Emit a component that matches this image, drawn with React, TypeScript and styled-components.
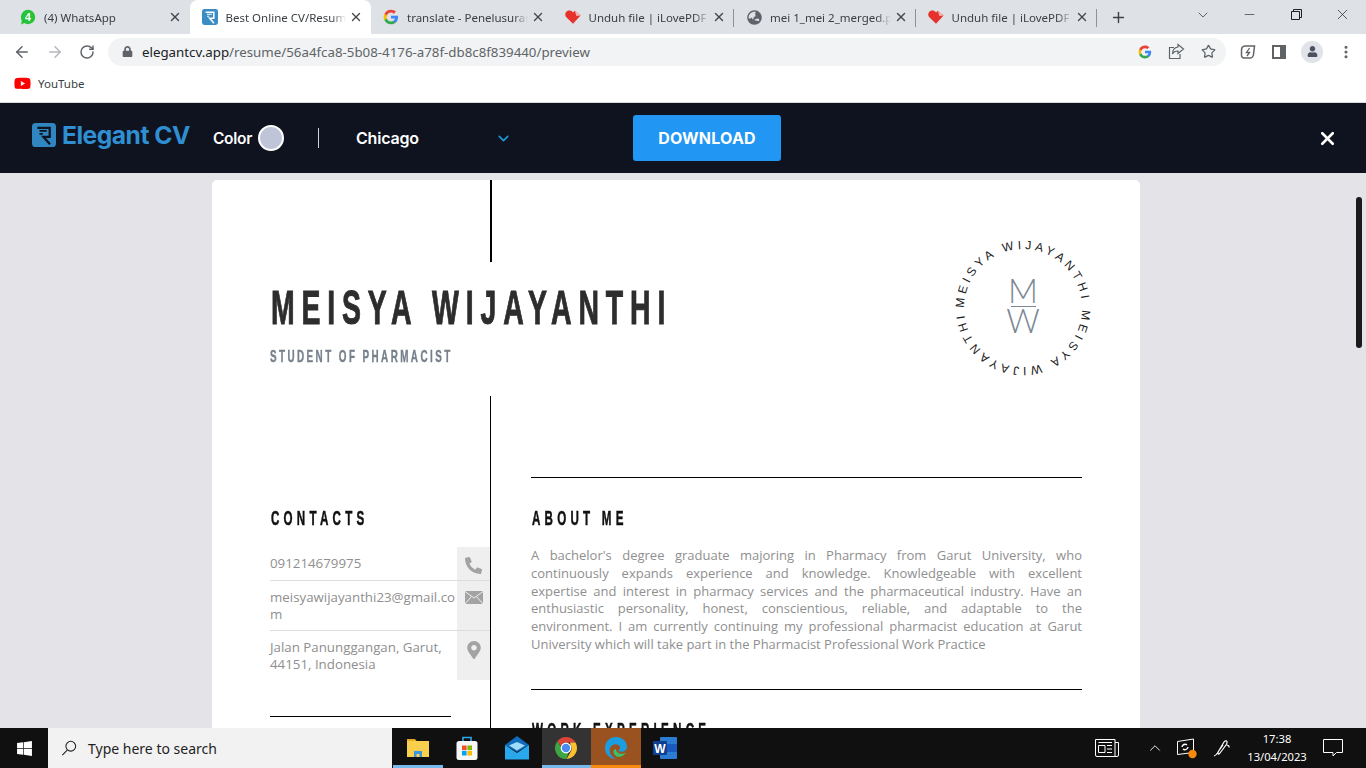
import React from "react";
import styled, { createGlobalStyle, css } from "styled-components";
import {
  ArrowLeft,
  ArrowRight,
  ChevronDown,
  ChevronUp,
  EllipsisVertical,
  Minus,
  Plus,
  RotateCw,
  Star,
  X,
} from "lucide-react";
import { FaGlobeAsia, FaLock, FaMapMarkerAlt, FaPhoneAlt, FaUser, FaWindows, FaYoutube } from "react-icons/fa";

// --- ICONS ---

const GoogleIcon = ({ size = 16 }: { size?: number }) => (
  <svg width={size} height={size} viewBox="0 0 24 24">
    <path fill="#4285f4" d="M22.56 12.25c0-.78-.07-1.53-.2-2.25H12v4.26h5.92c-.26 1.37-1.04 2.53-2.21 3.31v2.77h3.57c2.08-1.92 3.28-4.74 3.28-8.09z" />
    <path fill="#34a853" d="M12 23c2.97 0 5.46-.98 7.28-2.66l-3.57-2.77c-.98.66-2.23 1.06-3.71 1.06-2.86 0-5.29-1.93-6.16-4.53H2.18v2.84C3.99 20.53 7.7 23 12 23z" />
    <path fill="#fbbc05" d="M5.84 14.09c-.22-.66-.35-1.36-.35-2.09s.13-1.43.35-2.09V7.07H2.18C1.43 8.55 1 10.22 1 12s.43 3.45 1.18 4.93l2.85-2.22.81-.62z" />
    <path fill="#ea4335" d="M12 5.38c1.62 0 3.06.56 4.21 1.64l3.15-3.15C17.45 2.09 14.97 1 12 1 7.7 1 3.99 3.47 2.18 7.07l3.66 2.84c.87-2.6 3.3-4.53 6.16-4.53z" />
  </svg>
);

const WhatsAppIcon = () => (
  <svg width="16" height="16" viewBox="0 0 16 16">
    <circle cx="8" cy="8" r="7.2" fill="#25c337" />
    <path fill="#25c337" d="M1 15.5 2.2 10l3.4 3.6z" />
    <text x="8" y="11.6" textAnchor="middle" fontSize="10.5" fontWeight="700" fill="#fff" fontFamily="Liberation Sans">4</text>
  </svg>
);

const ResumeIcon = ({ size = 18, color = "#3a8cc4", ink = "#fff" }: { size?: number; color?: string; ink?: string }) => (
  <svg width={size} height={size} viewBox="0 0 16 16">
    <rect width="16" height="16" rx="2.4" fill={color} />
    <path fill="none" stroke={ink} strokeWidth="1.5" d="M3.6 3.2h8.2v6H7.6l4.4 5" />
    <path fill="none" stroke={ink} strokeWidth="1.1" d="M5 5.2h4.8M5 7.2h2.2" />
  </svg>
);

const HeartIcon = () => (
  <svg width="18" height="16" viewBox="0 0 18 16">
    <path fill="#e5322d" d="M9 15.5 1.2 8C-.4 6 .2 2.6 2.6 1.3 4.8.2 7.4.8 9 2.8l2-1.7L17.5 6.3 9 15.5z" />
    <path fill="#f7b5b2" d="M11 1.1 17.5 6.3l-4.6.6z" />
  </svg>
);

const ChromeIcon = () => (
  <svg width="24" height="24" viewBox="0 0 24 24">
    <path fill="#db4437" d="M12 1a11 11 0 0 1 9.53 5.5H12a5.5 5.5 0 0 0-5.2 3.7L3.6 4.9A11 11 0 0 1 12 1z" />
    <path fill="#fbc02d" d="M21.53 6.5A11 11 0 0 1 12.6 23l4.2-7.5a5.5 5.5 0 0 0 .2-5.6l-1-3.4z" />
    <path fill="#3da543" d="M3.6 4.9l4.6 8.9a5.5 5.5 0 0 0 6.1 2.9L12.6 23A11 11 0 0 1 3.6 4.9z" />
    <circle cx="12" cy="12" r="5.4" fill="#fff" />
    <circle cx="12" cy="12" r="4.2" fill="#4a8bf0" />
  </svg>
);

const EdgeIcon = () => (
  <svg width="24" height="24" viewBox="0 0 24 24">
    <path fill="#1b9de2" d="M1 12C1 5.9 5.9 1 12 1c6 0 11 4.3 11 9.8 0 3.2-2.6 5-5.4 5-1.6 0-3.1-.5-3.8-1.2 2-.6 2.9-2 2.2-3.8-.9-2.2-3.8-3.2-6.2-2.3C6.9 9.6 5 12.5 5.8 16c.7 3 3 5.8 6.2 7C5.9 23 1 18 1 12z" />
    <path fill="#37c26b" d="M9.5 15c-.3 3.6 3 6.6 6.8 5.7 2.7-.6 4.7-2.2 5.5-4.4-1 1-2.7 1.6-4.3 1.5-3.3-.1-5.2-1.7-5.8-4.8-.9.2-1.9 1-2.2 2z" />
  </svg>
);

const ExplorerIcon = () => (
  <svg width="24" height="24" viewBox="0 0 24 24">
    <path fill="#e5a823" d="M1 3h8l2 2.5H1z" />
    <rect x="1" y="5" width="22" height="16" fill="#fbcf4e" />
    <path fill="#3a96dd" d="M8 21v-6h8v6h-2.5v-3h-3v3z" />
  </svg>
);

const StoreIcon = () => (
  <svg width="24" height="26" viewBox="0 0 24 26">
    <path fill="none" stroke="#29a9e8" strokeWidth="1.6" d="M8 7V2.5h8V7" />
    <rect x="1.5" y="6" width="21" height="19" rx="2.5" fill="#f7f7f7" />
    <rect x="7" y="10.5" width="4.6" height="4.6" fill="#f25022" />
    <rect x="12.4" y="10.5" width="4.6" height="4.6" fill="#7fba00" />
    <rect x="7" y="15.9" width="4.6" height="4.6" fill="#00a4ef" />
    <rect x="12.4" y="15.9" width="4.6" height="4.6" fill="#ffb900" />
  </svg>
);

const MailIcon = () => (
  <svg width="26" height="26" viewBox="0 0 26 26">
    <path fill="#0f6cbd" d="M13 1 25 10 13 17 1 10z" />
    <path fill="#2aa8ee" d="M1 10 13 18l12-8v14.5H1z" />
    <path fill="#9fdcfb" d="M5 10.5 13 7l8 3.5-8 5z" />
  </svg>
);

const WordIcon = () => (
  <svg width="26" height="26" viewBox="0 0 26 26">
    <rect x="8" y="2" width="17" height="22" rx="1" fill="#2b7cd3" />
    <rect x="8" y="9" width="17" height="8" fill="#185abd" />
    <rect x="1" y="6" width="14" height="14" rx="1" fill="#103f91" />
    <text x="8" y="17.5" textAnchor="middle" fontSize="12" fontWeight="700" fill="#fff" fontFamily="Liberation Sans">W</text>
  </svg>
);

const NewsIcon = () => (
  <svg width="24" height="18" viewBox="0 0 24 18" fill="none" stroke="#fff" strokeWidth="1">
    <path d="M.5.5H20v17H2A1.5 1.5 0 0 1 .5 16zM20 3.5h3.5V16a1.5 1.5 0 0 1-1.5 1.5h-2" />
    <path d="M3.5 6.5H10v7H3.500zM12 6.5h5M12 10h5M12 13.5h5M3.5 3.5H17" />
  </svg>
);

const SyncIcon = () => (
  <svg width="22" height="22" viewBox="0 0 22 22" fill="none" stroke="#fff" strokeWidth="1">
    <path d="M1.5 4.5 17.5 2v13.5l-16 2z" />
    <path strokeWidth="1.4" d="M6 10c.3-2.4 3-3.5 5-2.2M12 10c-.3 2.4-3 3.3-5 2.2" />
    <circle cx="16.5" cy="17" r="4.2" fill="#f7890c" stroke="none" />
  </svg>
);

const PenIcon = () => (
  <svg width="20" height="20" viewBox="0 0 20 20" fill="none" stroke="#fff" strokeWidth="1.2">
    <path d="M2 18c1.5-.3 2.5-1.5 3.5-3L12 4c1-1.5 2.5-1.5 3-.5s0 2-1 3.5L8 15c-1 1.3-1.7 1.3-2 .5s0-1.5 1-3L11 7" />
    <path d="M14.5 7c1.5 0 3 1 2.500 2.500" />
  </svg>
);

const PanelIcon = () => (
  <svg width="14" height="14" viewBox="0 0 14 14" fill="none">
    <rect x="1" y="1" width="12" height="12" stroke="#5f6368" strokeWidth="2" />
    <rect x="8" y="1" width="5" height="12" fill="#5f6368" />
  </svg>
);

const ExtensionIcon = () => (
  <svg width="18" height="18" viewBox="0 0 18 18" fill="none" stroke="#5f6368" strokeWidth="1.5">
    <path d="M6 3h9.5l-1 8.5a4 4 0 0 1-4 3.5H5a2.5 2.5 0 0 1-2.5-3V7A4 4 0 0 1 6 3z" />
    <path strokeWidth="1.3" d="M10.5 5 7.5 9.500h3L8 13" />
  </svg>
);

const ShareIcon = () => (
  <svg width="17" height="17" viewBox="0 0 17 17" fill="none" stroke="#5f6368" strokeWidth="1.2">
    <path d="M6 4.5H1.5v11H12V11" />
    <path d="M10 1.500 15.500 6 10 10.500V8C7.500 8 5.500 9 4.500 11c0-4 2-6.500 5.500-7z" />
  </svg>
);

const RestoreIcon = () => (
  <svg width="11" height="11" viewBox="0 0 11 11" fill="none" stroke="#1f1f1f">
    <path d="M.5 2.5h8v8h-8zM2.5 2.5v-2h8v8h-2" />
  </svg>
);

const EnvelopeGlyph = () => (
  <svg width="18" height="13" viewBox="0 0 18 13">
    <rect width="18" height="13" fill="#a3a3a3" />
    <path d="M0 .5 9 7l9-6.500M0 13l6.500-7.500M18 13l-6.500-7.500" fill="none" stroke="#efefef" />
  </svg>
);

const MonogramLogo = () => (
  <LogoSvg viewBox="0 0 150 150">
    <defs>
      <path id="monogram-ring" d="M16 75a59 59 0 1 1 118 0a59 59 0 1 1 -118 0" />
    </defs>
    <text fontFamily="Liberation Sans" fontSize="12" fill="#1c1c1c">
      <textPath href="#monogram-ring" textLength="370" lengthAdjust="spacing">
        MEISYA WIJAYANTHI MEISYA WIJAYANTHI{"\u00a0"}
      </textPath>
    </text>
    <text x="75" y="70" textAnchor="middle" fontFamily="Lato" fontWeight="300" fontSize="33" fill="#7d8794">M</text>
    <path d="M63 73.5h25" stroke="#7d8794" strokeWidth="1" />
    <text x="75" y="100" textAnchor="middle" fontFamily="Lato" fontWeight="300" fontSize="33" fill="#7d8794">W</text>
  </LogoSvg>
);

// --- DATA ---

const TABS = [
  { title: "(4) WhatsApp", icon: <WhatsAppIcon /> },
  { title: "Best Online CV/Resume Builder", icon: <ResumeIcon />, active: true },
  { title: "translate - Penelusuran Google", icon: <GoogleIcon /> },
  { title: "Unduh file | iLovePDF", icon: <HeartIcon />, divider: true },
  { title: "mei 1_mei 2_merged.pdf", icon: <FaGlobeAsia size={15} color="#5f6368" />, divider: true },
  { title: "Unduh file | iLovePDF", icon: <HeartIcon />, divider: true },
];

const CONTACTS = [
  { text: "091214679975", icon: <FaPhoneAlt size={17} /> },
  { text: "meisyawijayanthi23@gmail.com", icon: <EnvelopeGlyph /> },
  { text: "Jalan Panunggangan, Garut, 44151, Indonesia", icon: <FaMapMarkerAlt size={18} /> },
];

const TASK_APPS = [
  { icon: <ExplorerIcon />, running: true },
  { icon: <StoreIcon /> },
  { icon: <MailIcon /> },
  { icon: <ChromeIcon />, running: true, state: "open" },
  { icon: <EdgeIcon />, running: true, state: "alert" },
  { icon: <WordIcon /> },
];

// Split by hand: the substitute font would wrap this text at other words
const ABOUT_LINES = [
  "A bachelor's degree graduate majoring in Pharmacy from Garut University, who",
  "continuously expands experience and knowledge. Knowledgeable with excellent",
  "expertise and interest in pharmacy services and the pharmaceutical industry. Have an",
  "enthusiastic personality, honest, conscientious, reliable, and adaptable to the",
  "environment. I am currently continuing my professional pharmacist education at Garut",
  "University which will take part in the Pharmacist Professional Work Practice",
];

// --- RENDER ---

const App = () => (
  <>
    <GlobalStyle />
    <Screen>
      <TabStrip>
        {TABS.map((tab, index) => (
          <Tab key={index} $active={tab.active} $divider={tab.divider}>
            <TabIcon>{tab.icon}</TabIcon>
            <TabTitle>{tab.title}</TabTitle>
            <X size={14} strokeWidth={2.4} color="#45484c" />
          </Tab>
        ))}
        <NewTab>
          <Plus size={17} strokeWidth={2} color="#3c4043" />
        </NewTab>
        <WindowControls>
          <ChevronDown size={16} strokeWidth={1} color="#1f1f1f" />
          <Minus size={15} strokeWidth={1} color="#1f1f1f" />
          <RestoreIcon />
          <X size={17} strokeWidth={1} color="#1f1f1f" />
        </WindowControls>
      </TabStrip>

      <Toolbar>
        <NavButtons>
          <ArrowLeft size={18} strokeWidth={2} color="#5f6368" />
          <ArrowRight size={18} strokeWidth={2} color="#b4b7ba" />
          <RotateCw size={16} strokeWidth={2.2} color="#5f6368" />
        </NavButtons>
        <AddressBar>
          <FaLock size={11} color="#5f6368" />
          <Url>
            <b>elegantcv.app</b>/resume/56a4fca8-5b08-4176-a78f-db8c8f839440/preview
          </Url>
          <AddressActions>
            <GoogleIcon size={14} />
            <ShareIcon />
            <Star size={15} strokeWidth={2} color="#5f6368" />
          </AddressActions>
        </AddressBar>
        <ToolbarActions>
          <ExtensionIcon />
          <PanelIcon />
          <Avatar>
            <FaUser size={11} color="#4a5262" />
          </Avatar>
          <EllipsisVertical size={16} strokeWidth={2.6} color="#5f6368" />
        </ToolbarActions>
      </Toolbar>

      <BookmarkBar>
        <FaYoutube size={17} color="#f00" />
        <span>YouTube</span>
      </BookmarkBar>

      <AppHeader>
        <Brand>
          <ResumeIcon size={24} color="#2f86c1" ink="#0e131f" />
          <BrandName>Elegant CV</BrandName>
        </Brand>
        <ColorPicker>
          Color
          <Swatch />
        </ColorPicker>
        <TemplateSelect>
          <span>Chicago</span>
          <ChevronDown size={17} strokeWidth={2.4} color="#1f95d4" />
        </TemplateSelect>
        <DownloadButton>DOWNLOAD</DownloadButton>
        <CloseButton>
          <X size={21} strokeWidth={3} color="#fff" />
        </CloseButton>
      </AppHeader>

      <Viewport>
        <PageArea>
          <ResumeCard>
            <TopRule />
            <Masthead>
              <NameBlock>
                <Name>MEISYA WIJAYANTHI</Name>
                <JobTitle>STUDENT OF PHARMACIST</JobTitle>
              </NameBlock>
              <MonogramLogo />
            </Masthead>
            <Columns>
              <SideColumn>
                <SectionTitle>CONTACTS</SectionTitle>
                <ContactList>
                  {CONTACTS.map((contact) => (
                    <ContactRow key={contact.text}>
                      <ContactText>{contact.text}</ContactText>
                      <ContactIcon>{contact.icon}</ContactIcon>
                    </ContactRow>
                  ))}
                </ContactList>
                <SideRule />
              </SideColumn>
              <MainColumn>
                <Section>
                  <SectionTitle>ABOUT ME</SectionTitle>
                  <Paragraph>
                    {ABOUT_LINES.map((line) => (
                      <ParagraphLine key={line}>{line}</ParagraphLine>
                    ))}
                  </Paragraph>
                </Section>
                <Section>
                  <SectionTitle>WORK EXPERIENCE</SectionTitle>
                </Section>
              </MainColumn>
            </Columns>
          </ResumeCard>
        </PageArea>
        <ScrollTrack>
          <ScrollThumb />
        </ScrollTrack>
      </Viewport>

      <Taskbar>
        <StartButton>
          <FaWindows size={17} color="#fff" />
        </StartButton>
        <SearchBox>
          <SearchGlyph viewBox="0 0 18 18">
            <circle cx="11" cy="7" r="5.5" />
            <path d="M7 11.5 1.5 17" />
          </SearchGlyph>
          Type here to search
        </SearchBox>
        <TaskApps>
          {TASK_APPS.map((app, index) => (
            <TaskApp key={index} $running={app.running} $state={app.state}>
              {app.icon}
            </TaskApp>
          ))}
        </TaskApps>
        <Tray>
          <TrayItem $width={60}>
            <NewsIcon />
          </TrayItem>
          <TrayItem $width={36}>
            <ChevronUp size={18} strokeWidth={1.2} color="#fff" />
          </TrayItem>
          <TrayItem $width={28}>
            <SyncIcon />
          </TrayItem>
          <TrayItem $width={42}>
            <PenIcon />
          </TrayItem>
          <Clock>
            <span>17:38</span>
            <span>13/04/2023</span>
          </Clock>
          <TrayItem $width={44}>
            <NotificationGlyph viewBox="0 0 20 18">
              <path d="M.5.5h19v13h-6L10 17v-3.5H.5z" />
            </NotificationGlyph>
          </TrayItem>
        </Tray>
      </Taskbar>
    </Screen>
  </>
);

export default App;

// Bebas Neue is not installed, so the headings squeeze a bold sans sideways
const condensed = css`
  font-family: "Liberation Sans", sans-serif;
  font-weight: 700;
  white-space: nowrap;
  transform: scaleX(0.58);
  transform-origin: left center;
`;

const GlobalStyle = createGlobalStyle`
  html, body {
    margin: 0;
    height: 100%;
    overflow: hidden;
  }

  * {
    box-sizing: border-box;
  }
`;

const Screen = styled.div`
  display: flex;
  flex-direction: column;
  width: 1366px;
  height: 768px;
  overflow: hidden;
  font-family: "Noto Sans", sans-serif;
`;

const TabStrip = styled.div`
  display: flex;
  align-items: stretch;
  height: 34px;
  padding-left: 8px;
  background: #dee1e6;
`;

const Tab = styled.div<{ $active?: boolean; $divider?: boolean }>`
  position: relative;
  display: flex;
  align-items: center;
  gap: 3px;
  width: 181.5px;
  padding: 0 8px 0 12px;
  border-radius: 8px 8px 0 0;
  background: ${({ $active }) => ($active ? "#fff" : "transparent")};

  &::after {
    content: "";
    display: ${({ $divider }) => ($divider ? "block" : "none")};
    position: absolute;
    right: 0;
    top: 9px;
    height: 18px;
    width: 1px;
    background: #8e9196;
  }
`;

const TabIcon = styled.span`
  display: flex;
  justify-content: center;
  width: 16px;
  margin-right: 5px;
  flex-shrink: 0;
`;

const TabTitle = styled.span`
  flex: 1;
  overflow: hidden;
  font-size: 11.5px;
  color: #3c4043;
  white-space: nowrap;
  -webkit-mask-image: linear-gradient(to right, #000 88%, transparent);
  mask-image: linear-gradient(to right, #000 88%, transparent);
`;

const NewTab = styled.div`
  display: flex;
  align-items: center;
  margin-left: 13px;
`;

const WindowControls = styled.div`
  display: grid;
  grid-template-columns: repeat(4, 46.5px);
  align-items: center;
  justify-items: center;
  height: 29px;
  margin-left: auto;
`;

const Toolbar = styled.div`
  display: flex;
  align-items: center;
  height: 33px;
  padding: 2px 12px 0 13px;
  background: #fff;
`;

const NavButtons = styled.div`
  display: flex;
  align-items: center;
  gap: 15px;
  width: 95px;
`;

const AddressBar = styled.div`
  display: flex;
  align-items: center;
  gap: 9px;
  width: 1118px;
  height: 28px;
  padding: 0 10px 0 14px;
  border-radius: 14px;
  background: #f1f3f4;
`;

const Url = styled.span`
  flex: 1;
  font-size: 13.3px;
  color: #5f6368;

  b {
    font-weight: 400;
    color: #202124;
  }
`;

const AddressActions = styled.div`
  display: flex;
  align-items: center;
  gap: 16px;
`;

const ToolbarActions = styled.div`
  display: flex;
  align-items: center;
  justify-content: space-between;
  flex: 1;
  padding-left: 13px;
`;

const Avatar = styled.span`
  display: flex;
  align-items: center;
  justify-content: center;
  width: 22px;
  height: 22px;
  border-radius: 50%;
  background: #e1e3e8;
`;

const BookmarkBar = styled.div`
  display: flex;
  align-items: center;
  gap: 7px;
  height: 36px;
  padding: 0 0 2px 14px;
  border-bottom: 1px solid #d9dadc;
  background: #fff;
  font-size: 11.5px;
  color: #3c4043;
`;

const AppHeader = styled.header`
  display: flex;
  align-items: center;
  height: 70px;
  padding-left: 32px;
  background: #0e131f;
  font-family: Inter, sans-serif;
  color: #fff;
`;

const Brand = styled.div`
  display: flex;
  align-items: center;
  gap: 6px;
  width: 181px;
  margin-bottom: 6px;
`;

const BrandName = styled.span`
  font-size: 24.6px;
  font-weight: 700;
  letter-spacing: -0.5px;
  color: #2f8fd2;
`;

const ColorPicker = styled.div`
  display: flex;
  align-items: center;
  gap: 6px;
  width: 106px;
  height: 20px;
  border-right: 1px solid #cfd2d8;
  font-size: 15.5px;
  font-weight: 600;
  letter-spacing: -0.3px;
`;

const Swatch = styled.span`
  width: 26px;
  height: 26px;
  border: 2px solid #fff;
  border-radius: 50%;
  background: #c0c4d8;
`;

const TemplateSelect = styled.div`
  display: flex;
  align-items: center;
  justify-content: space-between;
  width: 156px;
  margin-left: 37px;
  font-size: 16px;
  font-weight: 600;
  letter-spacing: -0.2px;
`;

const DownloadButton = styled.button`
  width: 148px;
  height: 46px;
  margin-left: 121px;
  border: 0;
  border-radius: 3px;
  background: #2196f3;
  font-family: Inter, sans-serif;
  font-size: 16px;
  font-weight: 700;
  letter-spacing: 0.2px;
  color: #fff;
`;

const CloseButton = styled.div`
  display: flex;
  margin-left: auto;
  margin-right: 28px;
`;

const Viewport = styled.main`
  flex: 1;
  display: flex;
  min-height: 0;
  overflow: hidden;
  background: #e3e3e8;
`;

const PageArea = styled.div`
  flex: 1;
  display: flex;
  justify-content: center;
  padding-top: 7px;
`;

const ScrollTrack = styled.div`
  width: 14px;
  padding: 24px 4px 0;
`;

const ScrollThumb = styled.div`
  width: 6px;
  height: 151px;
  border-radius: 3px;
  background: #1a1a1a;
`;

const ResumeCard = styled.article`
  width: 928px;
  height: 900px;
  border-radius: 5px;
  background: #fff;
`;

const TopRule = styled.div`
  width: 2px;
  height: 82px;
  margin-left: 278px;
  background: #000;
`;

const Masthead = styled.div`
  display: flex;
  align-items: flex-start;
  justify-content: space-between;
  height: 134px;
  padding: 18px 42px 0 59px;
`;

const NameBlock = styled.div`
  flex: 1;
  min-width: 0;
`;

const LogoSvg = styled.svg`
  flex-shrink: 0;
  width: 150px;
  height: 150px;
  margin-top: -47px;
`;

const Name = styled.h1`
  ${condensed}
  margin: 0;
  font-size: 49px;
  line-height: 54px;
  letter-spacing: 11.8px;
  color: #2d2d2d;
  -webkit-text-stroke: 1px #2d2d2d;
`;

const JobTitle = styled.div`
  ${condensed}
  margin-top: 13px;
  margin-left: -1px;
  font-size: 17px;
  line-height: 20px;
  letter-spacing: 4.2px;
  color: #76808c;
  -webkit-text-stroke: 0.4px #76808c;
`;

const Columns = styled.div`
  display: grid;
  grid-template-columns: 279px 1fr;
`;

const SideColumn = styled.aside`
  height: 504px;
  padding: 111px 0 0 58px;
  border-right: 1px solid #000;
`;

const SectionTitle = styled.h2`
  ${condensed}
  margin: 0 0 0 1px;
  font-size: 20px;
  line-height: 22px;
  letter-spacing: 7.3px;
  color: #111;
  -webkit-text-stroke: 0.5px #111;
`;

const ContactList = styled.div`
  margin-top: 18px;
`;

const ContactRow = styled.div`
  display: flex;
  justify-content: space-between;
  border-bottom: 1px solid #ddd;

  &:last-child {
    border-bottom: 0;
  }
`;

const ContactText = styled.div`
  width: 187px;
  min-height: 33px;
  padding: 7.5px 0;
  font-family: "Open Sans", sans-serif;
  font-size: 13.3px;
  line-height: 17px;
  color: #8f8f8f;
  overflow-wrap: anywhere;
`;

const ContactIcon = styled.div`
  display: flex;
  justify-content: center;
  width: 33px;
  padding-top: 10px;
  background: #efefef;
  color: #a3a3a3;
`;

const SideRule = styled.div`
  width: 181px;
  height: 1px;
  margin-top: 36px;
  background: #000;
`;

const MainColumn = styled.div`
  padding: 81px 58px 0 40px;
`;

const Section = styled.section`
  margin-bottom: 35px;
  padding-top: 29px;
  border-top: 1px solid #000;
`;

const Paragraph = styled.div`
  margin-top: 18px;
  font-family: "Open Sans", sans-serif;
  font-size: 13px;
  line-height: 17.8px;
  color: #8f8f8f;
`;

const ParagraphLine = styled.div`
  white-space: nowrap;
  text-align: justify;
  text-align-last: justify;

  &:last-child {
    text-align-last: left;
  }
`;

const Taskbar = styled.footer`
  position: relative;
  display: flex;
  align-items: stretch;
  height: 40px;
  background: #101010;
`;

const StartButton = styled.div`
  display: flex;
  align-items: center;
  justify-content: center;
  width: 48px;
`;

const SearchBox = styled.div`
  display: flex;
  align-items: center;
  gap: 11px;
  width: 344px;
  padding-left: 13px;
  background: #f2f2f2;
  font-size: 14px;
  color: #1f1f1f;
`;

const SearchGlyph = styled.svg`
  width: 16px;
  height: 16px;
  fill: none;
  stroke: #1f1f1f;
  stroke-width: 1.2;
`;

const TaskApps = styled.div`
  display: flex;
  margin-left: 1px;
`;

const TaskApp = styled.div<{ $running?: boolean; $state?: string }>`
  display: flex;
  align-items: center;
  justify-content: center;
  width: 49.5px;
  background: ${({ $state }) =>
    $state === "alert" ? "#9a5320" : $state === "open" ? "#333" : "transparent"};
  border-bottom: 3px solid
    ${({ $running, $state }) =>
      $state === "alert" ? "#f7890c" : $running ? "#76b9ed" : "transparent"};
  border-top: 3px solid transparent;
`;

const Tray = styled.div`
  display: flex;
  align-items: center;
  margin-left: auto;
  margin-right: 11px;
  color: #fff;
`;

const TrayItem = styled.div<{ $width: number }>`
  display: flex;
  align-items: center;
  justify-content: center;
  width: ${({ $width }) => $width}px;
`;

const Clock = styled.div`
  display: flex;
  flex-direction: column;
  align-items: center;
  width: 68px;
  font-size: 11.2px;
  line-height: 18px;
  color: #fff;
`;

const NotificationGlyph = styled.svg`
  width: 20px;
  height: 18px;
  fill: none;
  stroke: #fff;
`;
